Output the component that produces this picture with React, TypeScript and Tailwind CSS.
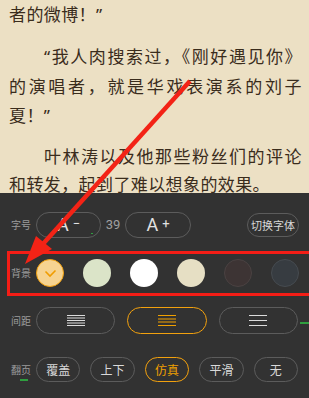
import React from "react";

const Q = ({ c }: { c: string }) => (
  <span className="font-['Noto_Sans',sans-serif]">{c}</span>
);

function Lines({ n, color }: { n: number; color: string }) {
  const ys = n === 5 ? [0.5, 3, 5.5, 8, 10.5] : n === 4 ? [0.5, 4, 7, 10.5] : [0.5, 5.5, 10.5];
  return (
    <svg width="18" height="11" viewBox="0 0 18 11">
      {ys.map((y, i) => (
        <line key={i} x1="0" x2="18" y1={y} y2={y} stroke={color} strokeWidth="1" />
      ))}
    </svg>
  );
}

export default function App() {
  const label = "w-[25px] shrink-0 text-[10px] leading-none text-[#9b9b9b]";
  const pill = "rounded-full border border-[#5c5c5c] flex items-center justify-center";
  return (
    <div className="relative w-[309px] h-[398px] overflow-hidden bg-[#323232] font-['Noto_Sans_CJK_SC',sans-serif]">
      {/* reading text */}
      <div className="h-[193px] overflow-hidden bg-[#ece0c4] pl-[9px] pr-[7px] text-[17px] leading-[29px] tracking-[0.4px] text-[#3a2c1c]">
        <div className="-mt-[1px]">
          者的微博！<Q c="”" />
        </div>
        <div className="mt-[12px]">
          <div className="indent-[35px] text-justify [text-align-last:justify]">
            <Q c="“" />我人肉搜索过，《刚好遇见你》
          </div>
          <div className="text-justify [text-align-last:justify]">的演唱者，就是华戏表演系的刘子</div>
          <div>
            夏！<Q c="”" />
          </div>
        </div>
        <div className="mt-[11px]">
          <div className="indent-[35px] text-justify [text-align-last:justify]">叶林涛以及他那些粉丝们的评论</div>
          <div className="-mt-[1px]">和转发，起到了难以想象的效果。</div>
        </div>
      </div>

      {/* settings panel */}
      <div className="relative h-[205px] bg-[#323232] pl-[11px] pr-[11px] pt-[19px]">
        {/* row 1 */}
        <div className="flex items-center h-[26px]">
          <span className={label}>字号</span>
          <div className={`${pill} relative w-[65px] h-[26px] text-[#e2e2e2] font-['Roboto',sans-serif]`}>
            <span className="text-[18px] leading-none">A</span>
            <span className="text-[13px] leading-none ml-[4px] -mt-[3px]">−</span>
            <span className="absolute left-[54px] top-[20px] w-[2px] h-[1px] bg-[#2f9e3f]" />
          </div>
          <span className="w-[24px] text-center text-[13px] text-[#a0a0a0] font-['Roboto',sans-serif]">39</span>
          <div className={`${pill} w-[66px] h-[26px] text-[#e2e2e2] font-['Roboto',sans-serif]`}>
            <span className="text-[18px] leading-none">A</span>
            <span className="text-[13px] leading-none ml-[4px] -mt-[3px]">+</span>
          </div>
          <div className={`${pill} ml-auto -mr-[1px] w-[52px] h-[24px] text-[11px] text-[#d8d8d8]`}>切换字体</div>
        </div>

        {/* row 2 */}
        <div className="flex items-center h-[28px] mt-[21px]">
          <span className={label}>背景</span>
          <div className="flex gap-[19px]">
            <div className="w-[28px] h-[28px] rounded-full bg-[#f6d391] border-[1.5px] border-[#f2a10e] flex items-center justify-center">
              <svg width="25" height="25" viewBox="0 0 25 25">
                <polyline points="7.5,10.5 12,15 17.5,9.5" fill="none" stroke="#f09c00" strokeWidth="1.6" />
              </svg>
            </div>
            <div className="w-[28px] h-[28px] rounded-full bg-[#dbe4c8]" />
            <div className="w-[28px] h-[28px] rounded-full bg-[#ffffff]" />
            <div className="w-[28px] h-[28px] rounded-full bg-[#e6dfc4]" />
            <div className="w-[28px] h-[28px] rounded-full bg-[#3d3434] border border-[#4a4242]" />
            <div className="w-[28px] h-[28px] rounded-full bg-[#373c41] border border-[#464b50]" />
          </div>
        </div>

        {/* row 3 */}
        <div className="flex items-center h-[27px] mt-[20px]">
          <span className={label}>间距</span>
          <div className="grid grid-cols-3 gap-[12px] flex-1">
            <div className={`${pill} h-[27px]`}>
              <Lines n={5} color="#dcdcdc" />
            </div>
            <div className="h-[27px] rounded-full border-[1.5px] border-[#f2a10e] flex items-center justify-center">
              <Lines n={4} color="#f0a000" />
            </div>
            <div className={`${pill} h-[27px]`}>
              <Lines n={3} color="#dcdcdc" />
            </div>
          </div>
        </div>

        {/* row 4 */}
        <div className="flex items-center h-[25px] mt-[23px]">
          <span className={`${label} relative`}>
            翻页
            <span className="absolute left-[9px] top-[14px] w-[8px] h-[2px] bg-[#2f9e3f]" />
          </span>
          <div className="grid grid-cols-5 gap-[10px] flex-1 text-[12px]">
            <div className={`${pill} h-[25px] text-[#d9d9d9]`}>覆盖</div>
            <div className={`${pill} h-[25px] text-[#d9d9d9]`}>上下</div>
            <div className="h-[25px] rounded-full border-[1.5px] border-[#f2a10e] flex items-center justify-center text-[#f0a000]">仿真</div>
            <div className={`${pill} h-[25px] text-[#d9d9d9]`}>平滑</div>
            <div className={`${pill} h-[25px] text-[#d9d9d9]`}>无</div>
          </div>
        </div>

        {/* green marker on right */}
        <span className="absolute left-[300px] top-[129px] w-[9px] h-[2px] bg-[#2f9e3f]" />

        {/* red highlight box */}
        <div className="absolute left-[7px] right-0 top-[58px] h-[45px] border-l-[3px] border-y-[3px] border-[#f41d16]" />
      </div>

      {/* red arrow */}
      <svg className="absolute inset-0 pointer-events-none" width="309" height="398" viewBox="0 0 309 398">
        <line x1="190" y1="81" x2="42" y2="245" stroke="#f32316" strokeWidth="4.5" />
        <polygon points="25,264 36,236 52,249" fill="#f32316" />
      </svg>
    </div>
  );
}
